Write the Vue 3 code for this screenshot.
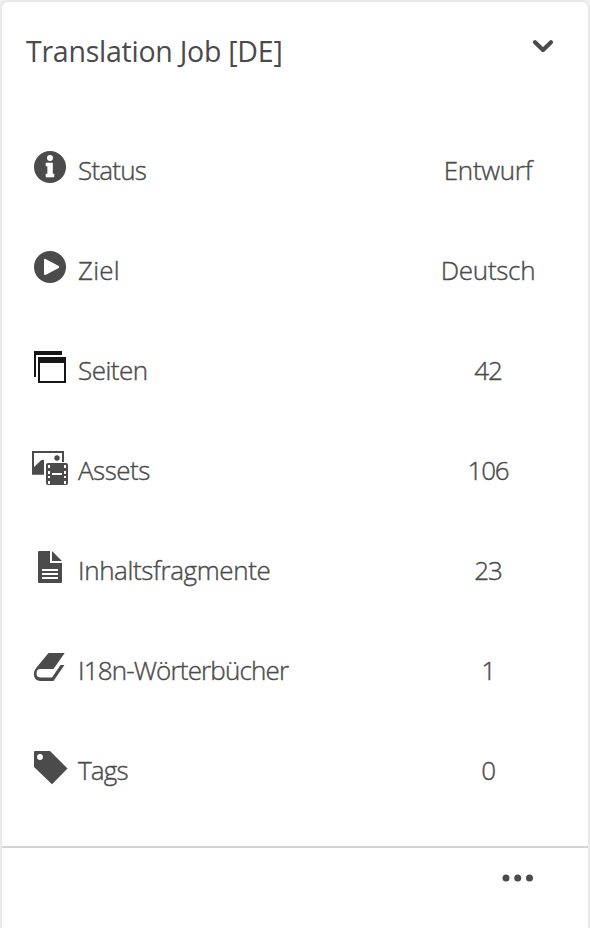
<script setup>
const rows = [
  { icon: 'info', label: 'Status', value: 'Entwurf' },
  { icon: 'play', label: 'Ziel', value: 'Deutsch' },
  { icon: 'pages', label: 'Seiten', value: '42' },
  { icon: 'assets', label: 'Assets', value: '106' },
  { icon: 'document', label: 'Inhaltsfragmente', value: '23' },
  { icon: 'book', label: 'I18n-Wörterbücher', value: '1' },
  { icon: 'tag', label: 'Tags', value: '0' },
]
</script>

<template>
  <main class="card">
    <header class="head">
      <h1 class="title">Translation Job [DE]</h1>
      <svg class="chevron" viewBox="0 0 22 14" width="22" height="14">
        <path d="M3 3.200l8 7.800L19 3.200" fill="none" stroke="#4b4b4b" stroke-width="4.200" stroke-linecap="round" stroke-linejoin="round" />
      </svg>
    </header>
    <ul class="rows">
      <li v-for="row in rows" :key="row.icon" class="row">
        <svg class="icon" viewBox="0 0 40 40" width="40" height="40" fill="#4b4b4b">
          <template v-if="row.icon === 'info'">
            <circle cx="20" cy="20" r="16" />
            <circle cx="20" cy="11" r="3" fill="#fff" />
            <path d="M16 16h6.500v11H24v3h-8v-3h1.700v-8H16z" fill="#fff" stroke="#fff" stroke-width=".6" stroke-linejoin="round" />
          </template>
          <template v-else-if="row.icon === 'play'">
            <circle cx="20" cy="20" r="16" />
            <path d="M15 12.900v14.200L28.300 20z" fill="#fff" stroke="#fff" stroke-width="2" stroke-linejoin="round" />
          </template>
          <g v-else-if="row.icon === 'pages'" fill="#161616">
            <path d="M4 4h28v4H6v22H4z" />
            <path d="M8 10h28v26H8zM10 16v18h24V16z" fill-rule="evenodd" />
          </g>
          <template v-else-if="row.icon === 'assets'">
            <path d="M2 4h32v11h-2V6H4v14l7.500-7H14v14.800H2z" />
            <circle cx="27" cy="11" r="2.700" />
            <rect x="16" y="16" width="22" height="22" rx="2" />
            <path d="M18 18h2v3h-2zM18 24h2v3h-2zM18 29h2v2h-2zM18 34h2v3h-2zM34 18h2v3h-2zM34 24h2v3h-2zM34 29h2v2h-2zM34 34h2v3h-2zM22 26h10v2H22z" fill="#fff" />
          </template>
          <template v-else-if="row.icon === 'document'">
            <path d="M9 4h11v12h12v19a1 1 0 0 1-1 1H9a1 1 0 0 1-1-1V5a1 1 0 0 1 1-1zM22 4l10 10H22z" />
            <path d="M12 22h16v2H12zM12 26h16v2H12zM12 30h16v2H12z" fill="#fff" />
          </template>
          <template v-else-if="row.icon === 'book'">
            <path d="M18.500 6H34.700L23.500 22H10.500C7.500 22 6.500 24 6.500 26.500C6.500 29 8 30.500 10.500 30.500H22L30.500 18H34.500L23.500 34H11C6 34 3.500 30.500 4 26C4.200 24 5 22.500 6.500 20.500Z" />
          </template>
          <template v-else>
            <path d="M5 4h15l17.500 17.500L22 37.300L4 20V5a1 1 0 0 1 1-1z" />
            <circle cx="10" cy="10" r="2.900" fill="#fff" />
          </template>
        </svg>
        <span class="label" :class="row.icon">{{ row.label }}</span>
        <span class="value" :class="{ number: /^\d+$/.test(row.value) }">{{ row.value }}</span>
      </li>
    </ul>
    <footer class="foot">
      <svg viewBox="0 0 32 8" width="32" height="8" fill="#4b4b4b">
        <circle cx="4" cy="4" r="3.500" />
        <circle cx="15.700" cy="4" r="3.500" />
        <circle cx="27.500" cy="4" r="3.500" />
      </svg>
    </footer>
  </main>
</template>

<style>
body {
  background: #f2f2f2;
}
</style>

<style scoped>
.card {
  box-sizing: border-box;
  height: 928px;
  border: 2px solid #e9e9e9;
  border-bottom: 0;
  border-radius: 8px 8px 0 0;
  background: #fff;
  color: #4b4b4b;
  font-family: "Open Sans", "Noto Sans", sans-serif;
  overflow: hidden;
}
.head {
  display: flex;
  justify-content: space-between;
  height: 116px;
  padding: 29px 34px 0 24px;
  box-sizing: border-box;
}
.title {
  margin: 0;
  font-size: 28.5px;
  line-height: 40px;
  font-weight: 400;
  letter-spacing: -0.25px;
  white-space: nowrap;
}
.chevron {
  margin-top: 8px;
}
.rows {
  margin: 0;
  padding: 0;
  list-style: none;
}
.row {
  display: flex;
  align-items: flex-start;
  height: 100px;
  padding: 29px 53px 0 28px;
  box-sizing: border-box;
}
.icon {
  flex: none;
}
.label,
.value {
  font-size: 26px;
  line-height: 40px;
  margin-top: 3px;
  font-weight: 300;
  -webkit-text-stroke: 0.4px #4b4b4b;
  white-space: nowrap;
}
.label {
  margin-left: 8px;
  letter-spacing: -0.8px;
}
.label.play {
  letter-spacing: 0.2px;
}
.label.pages {
  letter-spacing: -0.5px;
}
.label.assets {
  letter-spacing: -0.5px;
}
.label.document {
  letter-spacing: -0.38px;
}
.label.book {
  letter-spacing: -0.84px;
}
.value {
  width: 94px;
  margin-left: auto;
  display: flex;
  justify-content: center;
  letter-spacing: -0.3px;
}
.value.number {
  letter-spacing: -1.2px;
}
.foot {
  display: flex;
  justify-content: flex-end;
  height: 100px;
  margin-top: 28px;
  padding: 26px 54px 0 0;
  border-top: 2px solid #d5d5d5;
  box-sizing: border-box;
}
</style>
